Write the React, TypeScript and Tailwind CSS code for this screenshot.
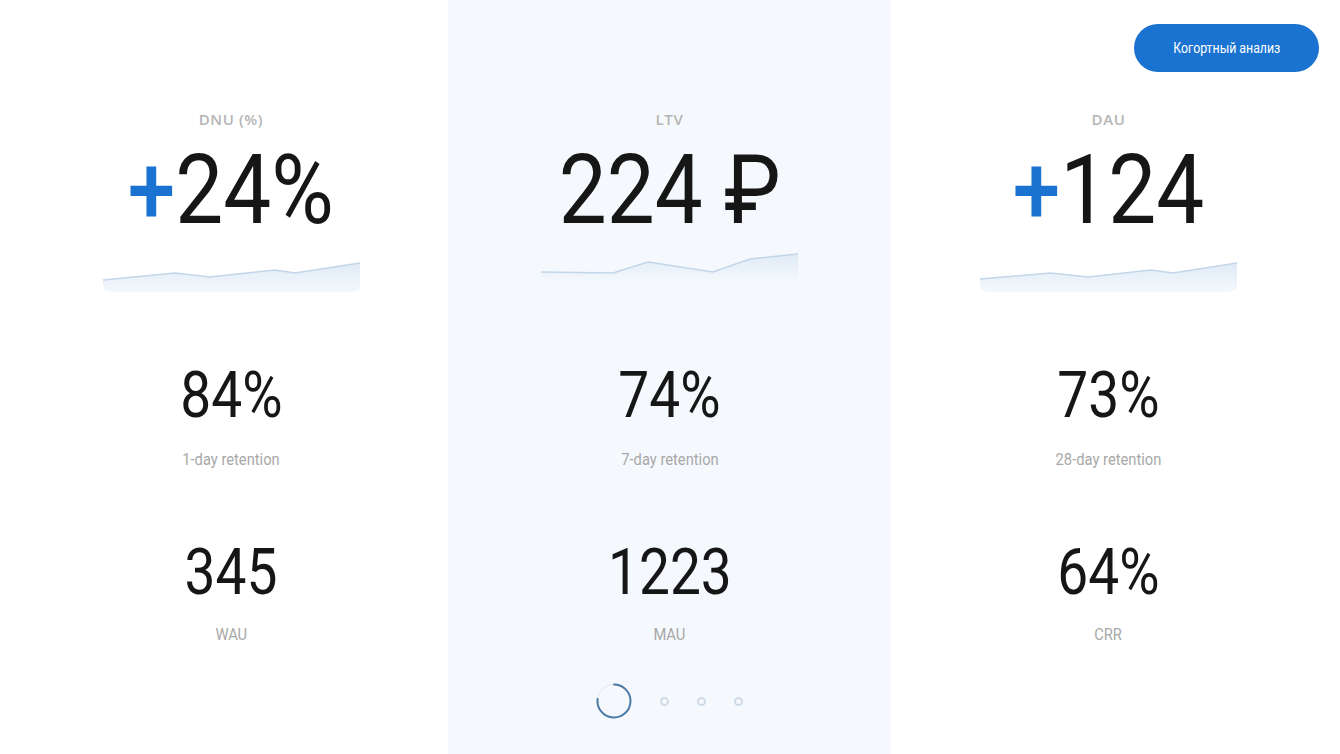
import React from "react";

type Stat = { value: string; label: string };

type Column = {
  title: string;
  plus: boolean;
  main: string;
  line: string;
  area: string;
  stats: Stat[];
  tinted?: boolean;
};

const columns: Column[] = [
  {
    title: "DNU (%)",
    plus: true,
    main: "24%",
    line: "0,28 72,21 107,25 172,18 192,21 257,11",
    area: "M0,28 L72,21 L107,25 L172,18 L192,21 L257,11 L257,32 Q257,40 249,40 L8,40 Q0,40 0,32 Z",
    stats: [
      { value: "84%", label: "1-day retention" },
      { value: "345", label: "WAU" },
    ],
  },
  {
    title: "LTV",
    plus: false,
    main: "224 ₽",
    line: "0,20 72,21 107,10 172,20 209,7 257,2",
    area: "M0,20 L72,21 L107,10 L172,20 L209,7 L257,2 L257,22 Q257,30 249,30 L8,30 Q0,30 0,22 Z",
    tinted: true,
    stats: [
      { value: "74%", label: "7-day retention" },
      { value: "1223", label: "MAU" },
    ],
  },
  {
    title: "DAU",
    plus: true,
    main: "124",
    line: "0,27 71,21 108,25 171,18 193,21 257,11",
    area: "M0,27 L71,21 L108,25 L171,18 L193,21 L257,11 L257,32 Q257,40 249,40 L8,40 Q0,40 0,32 Z",
    stats: [
      { value: "73%", label: "28-day retention" },
      { value: "64%", label: "CRR" },
    ],
  },
];

const Sparkline = ({ line, area, id }: { line: string; area: string; id: string }) => (
  <svg width="257" height="40" viewBox="0 0 257 40" className="block">
    <defs>
      <linearGradient id={id} x1="0" y1="0" x2="0" y2="1">
        <stop offset="0%" stopColor="#e0ebf7" />
        <stop offset="100%" stopColor="#f4f8fc" />
      </linearGradient>
    </defs>
    <path d={area} fill={`url(#${id})`} />
    <polyline points={line} fill="none" stroke="#c3d6e9" strokeWidth="1.5" />
  </svg>
);

const Pager = () => (
  <div className="flex items-center mt-[38px]">
    <svg width="36" height="36" viewBox="0 0 36 36">
      <circle cx="18" cy="18" r="16.5" fill="none" stroke="#e6ecf2" strokeWidth="1.5" />
      <path
        d="M18 1.5 A16.5 16.5 0 1 1 1.6 16"
        fill="none"
        stroke="#4c7ba6"
        strokeWidth="2"
        strokeLinecap="round"
      />
    </svg>
    {[0, 1, 2].map((i) => (
      <div
        key={i}
        className="ml-[28px] w-[9px] h-[9px] rounded-full border-2 border-[#cddbe6]"
      />
    ))}
  </div>
);

const App = () => {
  return (
    <div
      className="w-[1340px] h-[754px] grid grid-cols-[434px_443px_1fr] px-[14px] bg-white overflow-hidden"
      style={{ fontFamily: "Roboto, 'Liberation Sans', sans-serif" }}
    >
      {columns.map((c, idx) => (
        <div
          key={c.title}
          className={`flex flex-col items-center ${c.tinted ? "bg-[#f5f9fd]" : "bg-white"}`}
        >
          {/* шапка колонки */}
          <div className="h-[110px] w-full flex justify-end items-start pt-6 pr-[7px]">
            {idx === 2 && (
              <button className="h-12 w-[185px] rounded-full bg-[#1a73d0] text-white text-[14px] flex items-center justify-center">
                <span className="inline-block scale-x-[0.88]">Когортный анализ</span>
              </button>
            )}
          </div>

          <div
            className="h-5 leading-[18px] text-[15px] font-semibold tracking-[0.04em] text-[#b5b5b5]"
            style={{ fontFamily: "'Open Sans', 'Noto Sans', sans-serif" }}
          >
            {c.title}
          </div>

          <div className="mt-3 h-24 text-[96px] leading-none text-[#161616] whitespace-nowrap">
            <span className="inline-block scale-x-[0.89]">
              {c.plus && <span className="text-[#1a73d0] font-medium">+</span>}
              {c.main}
            </span>
          </div>

          <div className="mt-[14px]">
            <Sparkline line={c.line} area={c.area} id={`g${idx}`} />
          </div>

          <div className="mt-[72px] h-16 text-[64px] leading-none text-[#161616]">
            <span className="inline-block scale-x-[0.86]">{c.stats[0].value}</span>
          </div>
          <div className="mt-[22px] h-5 leading-5 text-[16px] text-[#a8a8a8] whitespace-nowrap">
            <span className="inline-block scale-x-[0.92]">{c.stats[0].label}</span>
          </div>

          <div className="mt-[71px] h-16 text-[64px] leading-none text-[#161616]">
            <span className="inline-block scale-x-[0.86]">{c.stats[1].value}</span>
          </div>
          <div className="mt-[20px] h-5 leading-5 text-[16px] text-[#a8a8a8] whitespace-nowrap">
            <span className="inline-block scale-x-[0.92]">{c.stats[1].label}</span>
          </div>

          {c.tinted && <Pager />}
        </div>
      ))}
    </div>
  );
};

export default App;
